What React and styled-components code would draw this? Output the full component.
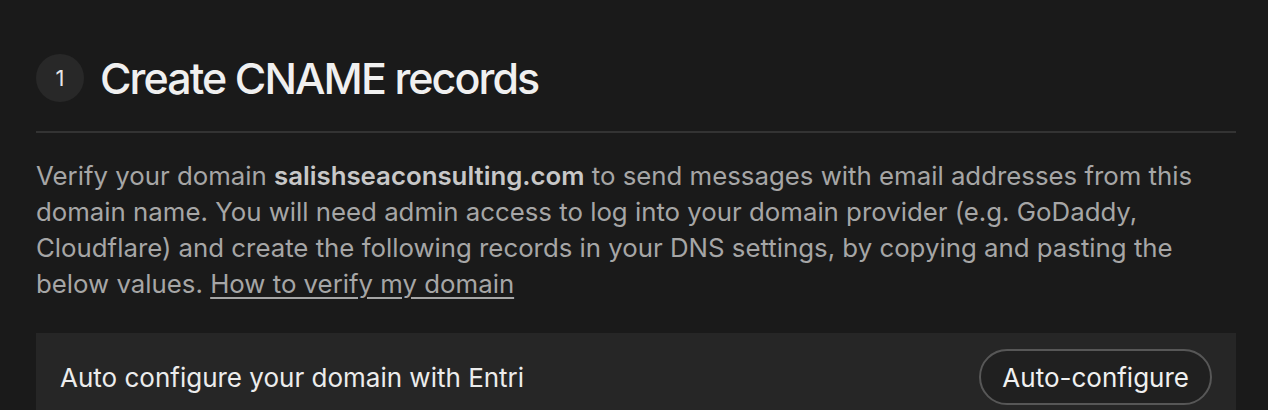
import styled, { createGlobalStyle } from "styled-components";

const GlobalStyle = createGlobalStyle`
  html, body {
    margin: 0;
    padding: 0;
    background: #1a1a1a;
  }
  body {
    font-family: Inter, "Noto Sans", sans-serif;
    -webkit-font-smoothing: antialiased;
  }
`;

const Page = styled.div`
  width: 1268px;
  height: 410px;
  box-sizing: border-box;
  padding: 54px 32px 0 36px;
  overflow: hidden;
`;

const Header = styled.div`
  display: flex;
  align-items: center;
  gap: 16px;
  padding-bottom: 29px;
  border-bottom: 2px solid #333333;
`;

const StepBadge = styled.div`
  width: 48px;
  height: 48px;
  border-radius: 50%;
  background: #282828;
  color: #e6e6e6;
  display: flex;
  align-items: center;
  justify-content: center;
  font-size: 22px;
`;

const Title = styled.h1`
  margin: 0;
  font-size: 43px;
  line-height: 48px;
  font-weight: 500;
  letter-spacing: -0.045em;
  color: #f0f0f0;
`;

const Description = styled.p`
  margin: 25px 0 0;
  font-size: 25.8px;
  line-height: 36px;
  color: #a6a6a6;

  strong {
    font-weight: 600;
    color: #c8c8c8;
  }

  a {
    color: #a6a6a6;
    text-decoration: underline;
    text-underline-offset: 4px;
  }
`;

const EntriBox = styled.div`
  margin-top: 31px;
  background: #262626;
  display: flex;
  align-items: center;
  justify-content: space-between;
  padding: 16px 24px;
`;

const EntriLabel = styled.span`
  font-size: 26px;
  color: #ececec;
`;

const PillButton = styled.button`
  height: 56px;
  padding: 0 21px;
  border-radius: 28px;
  border: 2px solid #575757;
  background: #202020;
  color: #f0f0f0;
  font-family: inherit;
  font-size: 26px;
`;

export default function App() {
  return (
    <>
      <GlobalStyle />
      <Page>
        <Header>
          <StepBadge>1</StepBadge>
          <Title>Create CNAME records</Title>
        </Header>
        <Description>
          Verify your domain <strong>salishseaconsulting.com</strong> to send
          messages with email addresses from this domain name. You will need
          admin access to log into your domain provider (e.g. GoDaddy,
          Cloudflare) and create the following records in your DNS settings, by
          copying and pasting the below values.{" "}
          <a href="#">How to verify my domain</a>
        </Description>
        <EntriBox>
          <EntriLabel>Auto configure your domain with Entri</EntriLabel>
          <PillButton>Auto-configure</PillButton>
        </EntriBox>
      </Page>
    </>
  );
}
